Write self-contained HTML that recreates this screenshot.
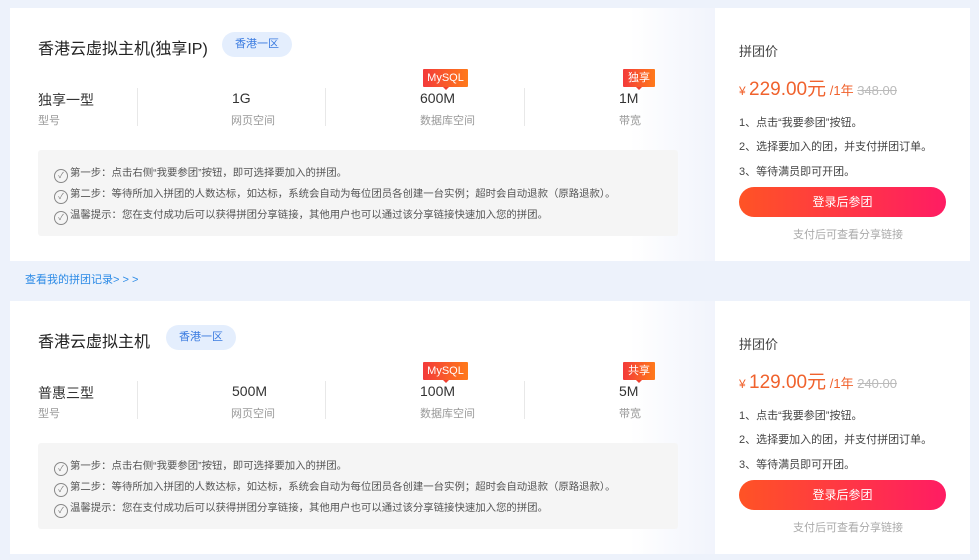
<!DOCTYPE html><html><head><meta charset="utf-8"><style>
*{margin:0;padding:0;box-sizing:border-box}
body{width:979px;height:560px;background:#edf2fb;font-family:"Liberation Sans","Noto Sans CJK SC",sans-serif;position:relative;overflow:hidden;color:#333}
.card{position:absolute;left:10px;width:960px;height:253px}
.lp{position:absolute;left:0;top:0;width:705px;height:253px;background:linear-gradient(90deg,#fff 0,#fff 620px,#f1f4fc 705px)}
.rp{position:absolute;left:705px;top:0;width:255px;height:253px;background:#fff}
.a{position:absolute;white-space:nowrap}
.title{font-size:16px;color:#222}
.badge{background:#e4eefd;color:#3a7be0;font-size:11px;border-radius:13px;height:25px;line-height:25px;text-align:center}
.v{font-size:14px;color:#333}
.s{font-size:11px;color:#999}
.div{position:absolute;width:1px;height:38px;background:#e8e8e8}
.tag{position:absolute;height:18px;line-height:18px;font-size:11px;color:#fff;text-align:center;background:linear-gradient(90deg,#f33a3a,#ff7a1a);border-radius:1px}
.tag:after{content:"";position:absolute;left:50%;margin-left:-3px;bottom:-3px;border:3px solid transparent;border-bottom:0;border-top-color:#f04030}
.box{position:absolute;left:28px;top:142px;width:640px;height:86px;background:#f5f5f5;border-radius:3px}
.box p{position:absolute;left:16px;font-size:10.4px;color:#555;white-space:nowrap}
.box p:before{content:"✓";display:inline-block;width:12px;height:12px;border:1px solid #888;border-radius:50%;font-size:8px;line-height:11px;text-align:center;margin-right:2px;color:#777;vertical-align:-2px}
.btn{position:absolute;left:24px;top:179px;width:207px;height:30px;border-radius:15px;background:linear-gradient(90deg,#ff5325,#ff1c63);color:#fff;font-size:12px;text-align:center;line-height:30px}
.li{font-size:11px;color:#444}
</style></head><body>

<div class="card" style="top:8px">
<div class="lp">
<div class="a title" style="left:28px;top:27px">香港云虚拟主机(独享IP)</div>
<div class="a badge" style="left:212px;top:24px;width:70px">香港一区</div>
<div class="a v" style="left:28px;top:82px">独享一型</div><div class="a s" style="left:28px;top:104px">型号</div>
<div class="div" style="left:127px;top:80px"></div>
<div class="a v" style="left:222px;top:82px">1G</div><div class="a s" style="left:221px;top:104px">网页空间</div>
<div class="div" style="left:315px;top:80px"></div>
<div class="tag" style="left:413px;top:61px;width:45px">MySQL</div>
<div class="a v" style="left:410px;top:82px">600M</div><div class="a s" style="left:410px;top:104px">数据库空间</div>
<div class="div" style="left:514px;top:80px"></div>
<div class="tag" style="left:613px;top:61px;width:32px">独享</div>
<div class="a v" style="left:609px;top:82px">1M</div><div class="a s" style="left:609px;top:104px">带宽</div>
<div class="box"><p style="top:14px">第一步：点击右侧“我要参团”按钮，即可选择要加入的拼团。</p><p style="top:35px">第二步：等待所加入拼团的人数达标，如达标，系统会自动为每位团员各创建一台实例；超时会自动退款（原路退款）。</p><p style="top:56px">温馨提示：您在支付成功后可以获得拼团分享链接，其他用户也可以通过该分享链接快速加入您的拼团。</p></div>
</div>
<div class="rp">
<div class="a" style="left:24px;top:33px;font-size:13px;color:#444">拼团价</div>
<div class="a" style="left:24px;top:66px;color:#f0622d"><span style="font-size:12px">¥ </span><span style="font-size:19px">229.00元</span><span style="font-size:13px"> /1年 </span><span style="font-size:13px;color:#bbb;text-decoration:line-through">348.00</span></div>
<div class="a li" style="left:24px;top:106px">1、点击“我要参团”按钮。</div>
<div class="a li" style="left:24px;top:130px">2、选择要加入的团，并支付拼团订单。</div>
<div class="a li" style="left:24px;top:155px">3、等待满员即可开团。</div>
<div class="btn">登录后参团</div>
<div class="a" style="left:78px;top:218px;font-size:11px;color:#aaa">支付后可查看分享链接</div>
</div>
</div>

<div class="a" style="left:25px;top:271px;font-size:11px;color:#2b8ae6">查看我的拼团记录&gt; &gt; &gt;</div>

<div class="card" style="top:301px">
<div class="lp">
<div class="a title" style="left:28px;top:27px">香港云虚拟主机</div>
<div class="a badge" style="left:156px;top:24px;width:70px">香港一区</div>
<div class="a v" style="left:28px;top:82px">普惠三型</div><div class="a s" style="left:28px;top:104px">型号</div>
<div class="div" style="left:127px;top:80px"></div>
<div class="a v" style="left:222px;top:82px">500M</div><div class="a s" style="left:221px;top:104px">网页空间</div>
<div class="div" style="left:315px;top:80px"></div>
<div class="tag" style="left:413px;top:61px;width:45px">MySQL</div>
<div class="a v" style="left:410px;top:82px">100M</div><div class="a s" style="left:410px;top:104px">数据库空间</div>
<div class="div" style="left:514px;top:80px"></div>
<div class="tag" style="left:613px;top:61px;width:32px">共享</div>
<div class="a v" style="left:609px;top:82px">5M</div><div class="a s" style="left:609px;top:104px">带宽</div>
<div class="box"><p style="top:14px">第一步：点击右侧“我要参团”按钮，即可选择要加入的拼团。</p><p style="top:35px">第二步：等待所加入拼团的人数达标，如达标，系统会自动为每位团员各创建一台实例；超时会自动退款（原路退款）。</p><p style="top:56px">温馨提示：您在支付成功后可以获得拼团分享链接，其他用户也可以通过该分享链接快速加入您的拼团。</p></div>
</div>
<div class="rp">
<div class="a" style="left:24px;top:33px;font-size:13px;color:#444">拼团价</div>
<div class="a" style="left:24px;top:66px;color:#f0622d"><span style="font-size:12px">¥ </span><span style="font-size:19px">129.00元</span><span style="font-size:13px"> /1年 </span><span style="font-size:13px;color:#bbb;text-decoration:line-through">240.00</span></div>
<div class="a li" style="left:24px;top:106px">1、点击“我要参团”按钮。</div>
<div class="a li" style="left:24px;top:130px">2、选择要加入的团，并支付拼团订单。</div>
<div class="a li" style="left:24px;top:155px">3、等待满员即可开团。</div>
<div class="btn">登录后参团</div>
<div class="a" style="left:78px;top:218px;font-size:11px;color:#aaa">支付后可查看分享链接</div>
</div>
</div>
</body></html>
